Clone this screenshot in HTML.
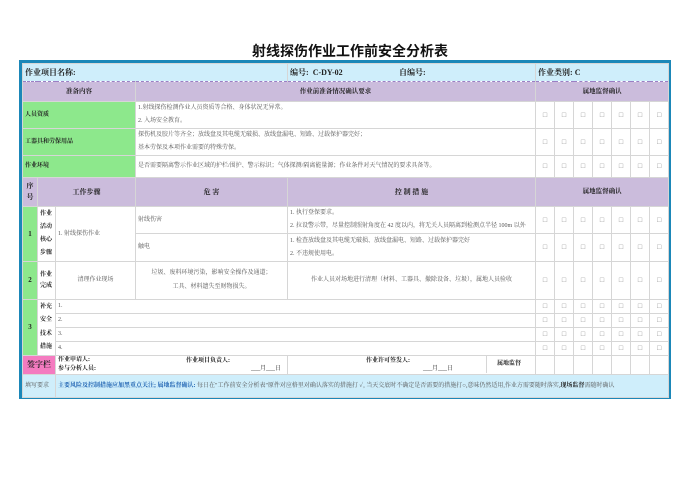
<!DOCTYPE html>
<html><head><meta charset="utf-8"><style>
body{margin:0;width:700px;height:494px;background:#fff;font-family:"Liberation Serif","Noto Serif CJK SC","Noto Sans CJK SC",serif;position:relative;overflow:hidden}
.title{position:absolute;top:41px;left:0;width:700px;text-align:center;font-size:14px;font-weight:bold;color:#111;font-family:"Liberation Sans","Noto Sans CJK SC",sans-serif}
.frame{position:absolute;left:19px;top:60px;width:646px;height:333px;border:3px solid #1b87b8;background:#fff}
table{border-collapse:collapse;table-layout:fixed;position:absolute;left:0;top:0;width:646px}
td{padding:0 2px;font-size:6px;color:#555;border:1px solid #d6d6d6;overflow:hidden;white-space:nowrap;line-height:1.5}
.b{font-weight:bold;color:#222}
.hd td{background:#cfeefb;font-size:8px;font-weight:bold;color:#222;border-bottom:1px dashed #9b7fc4}
.lil{background:#cbbcdc;font-weight:bold;color:#222;text-align:center;font-size:6.5px;border-top:1px dashed #8d6fc0;border-bottom:1px dashed #8d6fc0}
.gr{background:#8de88c;font-weight:bold;color:#222}
.cb{text-align:center;color:#888;font-size:7px;padding:0}
.dr{border-right:1px dashed #9b7fc4}
.pk{background:#f47bc0;font-weight:bold;color:#222;font-size:8px;text-align:center}
.lb{background:#cfeefb}
.c{text-align:center}
.sep td{border-top:1px dashed #8d6fc0}
.ll{line-height:2.1}
</style></head><body>
<div class="title">射线探伤作业工作前安全分析表</div>
<div class="frame">
<table>
<colgroup><col style="width:15px"><col style="width:18px"><col style="width:80px"><col style="width:152px"><col style="width:248px"><col style="width:19px"><col style="width:19px"><col style="width:19px"><col style="width:19px"><col style="width:19px"><col style="width:19px"><col style="width:19px"></colgroup>
<tr class="hd" style="height:18px"><td colspan="4">作业项目名称:</td><td colspan="1" style="padding:0"><span style="display:inline-block;width:111px">&nbsp;编号: &nbsp;C-DY-02</span>自编号:</td><td colspan="7">作业类别: C</td></tr>
<tr style="height:20px"><td colspan="3" class="lil">准备内容</td><td colspan="2" class="lil">作业前准备情况确认要求</td><td colspan="7" class="lil">属地监督确认</td></tr>
<tr style="height:27px"><td colspan="3" class="gr">人员资质</td><td colspan="2" class="ll">1.射线探伤检测作业人员资质等合格、身体状况无异常。<br>2. 入场安全教育。</td><td class="cb">□</td><td class="cb">□</td><td class="cb">□</td><td class="cb">□</td><td class="cb">□</td><td class="cb">□</td><td class="cb">□</td></tr>
<tr style="height:27px"><td colspan="3" class="gr">工器具和劳保用品</td><td colspan="2" class="ll">探伤机及胶片等齐全；放线盘及其电缆无破损、放线盘漏电、短路、过载保护器完好；<br>基本劳保及本项作业需要的特殊劳保。</td><td class="cb">□</td><td class="cb">□</td><td class="cb">□</td><td class="cb">□</td><td class="cb">□</td><td class="cb">□</td><td class="cb">□</td></tr>
<tr style="height:22px"><td colspan="3" class="gr">作业环境</td><td colspan="2">是否需要隔离警示作业区域的护栏/围护、警示标识；气体探测/隔离能量源；作业条件对天气情况的要求具备等。</td><td class="cb">□</td><td class="cb">□</td><td class="cb">□</td><td class="cb">□</td><td class="cb">□</td><td class="cb">□</td><td class="cb">□</td></tr>
<tr style="height:29px"><td class="lil" style="font-size:7px;line-height:1.6">序<br>号</td><td colspan="2" class="lil" style="font-size:7px">工作步骤</td><td class="lil" style="font-size:7px">危 害</td><td class="lil" style="font-size:7px">控 制 措 施</td><td colspan="7" class="lil">属地监督确认</td></tr>
<tr style="height:27px"><td rowspan="2" class="gr c" style="font-size:7px">1</td><td rowspan="2" class="b dr" style="line-height:2.2">作业<br>活动<br>核心<br>步骤</td><td rowspan="2">1. 射线探伤作业</td><td>射线伤害</td><td class="ll">1. 执行登保要求。<br>2. 拉设警示带，尽量控制照射角度在 42 度以内，将无关人员隔离到检测点半径 100m 以外</td><td class="cb">□</td><td class="cb">□</td><td class="cb">□</td><td class="cb">□</td><td class="cb">□</td><td class="cb">□</td><td class="cb">□</td></tr>
<tr style="height:28px"><td>触电</td><td class="ll">1. 检查放线盘及其电缆无破损、放线盘漏电、短路、过载保护器完好<br>2. 不违规使用电。</td><td class="cb">□</td><td class="cb">□</td><td class="cb">□</td><td class="cb">□</td><td class="cb">□</td><td class="cb">□</td><td class="cb">□</td></tr>
<tr style="height:38px" class="sep"><td class="gr c" style="font-size:7px">2</td><td class="b dr" style="line-height:1.8">作业<br>完成</td><td class="c">清理作业现场</td><td class="c" style="line-height:2.2">垃圾、废料环境污染，影响安全操作及通道；<br>工具、材料遗失至财物损失。</td><td class="c">作业人员对场地进行清理（材料、工器具、撤除设备、垃圾），属地人员验收</td><td class="cb">□</td><td class="cb">□</td><td class="cb">□</td><td class="cb">□</td><td class="cb">□</td><td class="cb">□</td><td class="cb">□</td></tr>
<tr style="height:14px" class="sep"><td rowspan="4" class="gr c" style="font-size:7px">3</td><td rowspan="4" class="b dr" style="line-height:2.2">补充<br>安全<br>技术<br>措施</td><td colspan="3">1.</td><td class="cb">□</td><td class="cb">□</td><td class="cb">□</td><td class="cb">□</td><td class="cb">□</td><td class="cb">□</td><td class="cb">□</td></tr>
<tr style="height:14px"><td colspan="3">2.</td><td class="cb">□</td><td class="cb">□</td><td class="cb">□</td><td class="cb">□</td><td class="cb">□</td><td class="cb">□</td><td class="cb">□</td></tr>
<tr style="height:14px"><td colspan="3">3.</td><td class="cb">□</td><td class="cb">□</td><td class="cb">□</td><td class="cb">□</td><td class="cb">□</td><td class="cb">□</td><td class="cb">□</td></tr>
<tr style="height:14px"><td colspan="3">4.</td><td class="cb">□</td><td class="cb">□</td><td class="cb">□</td><td class="cb">□</td><td class="cb">□</td><td class="cb">□</td><td class="cb">□</td></tr>
<tr style="height:18px" class="sep"><td colspan="2" class="pk">签字栏</td><td colspan="2" class="b" style="position:relative">作业申请人:<span style="position:absolute;left:130px;top:1px">作业项目负责人:</span><br>参与分析人员:<span style="position:absolute;left:195px;top:9px;font-weight:normal">___月___日</span></td><td style="position:relative" class="b"><span style="position:absolute;left:78px;top:1px">作业许可签发人:</span><span style="position:absolute;left:135px;top:9px;font-weight:normal">___月___日</span><span style="position:absolute;left:198px;top:5px;border-left:1px solid #d6d6d6;padding-left:10px;height:18px;top:-1px;line-height:18px">属地监督</span></td><td></td><td></td><td></td><td></td><td></td><td></td><td></td></tr>
<tr style="height:23px" class="sep"><td colspan="2" class="lb dr">填写要求</td><td colspan="10" class="lb"><span style="color:#1a5fb0;font-weight:bold">主要风险及控制措施应加黑重点关注; 属地监督确认:</span> 每日在"工作前安全分析表"原件对应格里对确认落实的措施打 ✓, 当天交底时不确定是否需要的措施打○,意味仍然适用,作业方需要随时落实,<b style="color:#222">现场监督</b>需随时确认</td></tr>
</table>
</div>
</body></html>
